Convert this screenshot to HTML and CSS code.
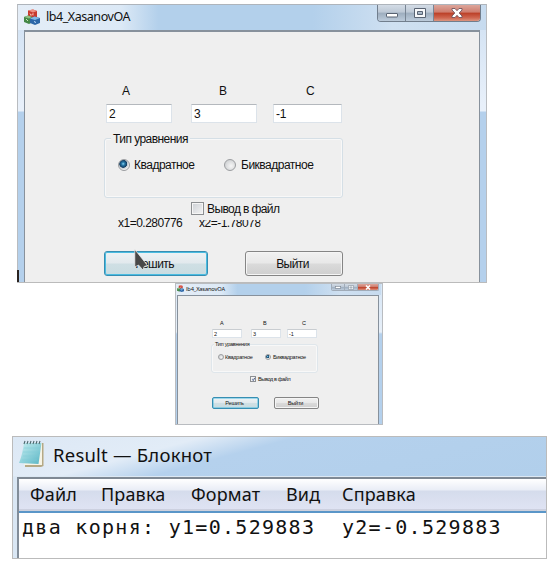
FILE: index.html
```html
<!DOCTYPE html>
<html lang="ru">
<head>
<meta charset="utf-8">
<title>lb4_XasanovOA</title>
<link rel="stylesheet" href="styles.css">
</head>
<body>
<svg class="defs" width="0" height="0">
  <defs>
    <linearGradient id="page" x1="0" y1="0" x2="1" y2="1"><stop offset="0" stop-color="#c9eff2"/><stop offset="1" stop-color="#58b5c4"/></linearGradient>
    <symbol id="mfc" viewBox="0 0 16 16">
      <path d="M4 1.500L9 .5l4 1.500v6l-4 1.500L4 8z" fill="#c83a2e"/><path d="M4 1.500L9 .5l4 1.500-4 1.500z" fill="#ee9184"/><path d="M6 4.500l1 2 2-2v2" fill="none" stroke="#ffd3c7" stroke-width=".8"/>
      <path d="M0 8l4-1.500L8 8v5.500l-3 1.500-5-2z" fill="#438746"/><path d="M0 8l4-1.500L8 8l-3 1.500z" fill="#91bf83"/><path d="M2 10l2 2" stroke="#c9e8af"/>
      <path d="M6 9.500l4.500-2L16 9v5l-5 2-5-2z" fill="#2b66a8"/><path d="M6 9.500l4.500-2L16 9l-5 2z" fill="#83b9e4"/><path d="M10 12.500l2 1" stroke="#c0dfff"/>
    </symbol>
  </defs>
</svg>

<section class="window main">
  <header class="titlebar">
    <svg class="app-icon"><use href="#mfc"/></svg>
    <span class="title">lb4_XasanovOA</span>
    <div class="controls">
      <i class="ctl min"><svg viewBox="0 0 12 5"><rect x=".5" y=".5" width="11" height="3.500" rx=".5" fill="#fff" stroke="#596372"/></svg></i>
      <i class="ctl max"><svg viewBox="0 0 12 10"><path d="M.5.5h11v9H.5zM3.500 3.500v3h5v-3z" fill="#f7f8fa" fill-rule="evenodd" stroke="#596372"/></svg></i>
      <i class="ctl close"><svg viewBox="0 0 12 10"><path d="M1 .5h3l2 2.200 2-2.200h3v1.500L8.200 5 11 8v1.500H8L6 7.300 4 9.500H1V8l2.800-3L1 2z" fill="#fff" stroke="#71545c" stroke-width=".9"/></svg></i>
    </div>
  </header>
  <div class="client">
    <div class="labels"><span>A</span><span>B</span><span>C</span></div>
    <div class="inputs"><div class="field">2</div><div class="field">3</div><div class="field">-1</div></div>
    <div class="group">
      <span class="legend">Тип уравнения</span>
      <div class="choices"><i class="radio on"></i><span class="quad">Квадратное</span><i class="radio"></i><span class="biquad">Биквадратное</span></div>
    </div>
    <div class="check-row"><i class="check"></i><span>Вывод в файл</span></div>
    <div class="answer"><span>x1=0.280776</span><span>x2=-1.78078</span></div>
    <div class="buttons"><div class="btn primary">Решить</div><div class="btn">Выйти</div></div>
  </div>
  <svg class="cursor" viewBox="0 0 14 22"><path d="M.8.5v17.500l3.700-2 4.500 5 1.200-3.500 3.300-1z" fill="#484848" stroke="#f2f2f2" stroke-width=".7"/></svg>
</section>

<section class="window small">
  <header class="titlebar">
    <svg class="app-icon"><use href="#mfc"/></svg>
    <span class="title">lb4_XasanovOA</span>
    <div class="controls">
      <i class="ctl min"><svg viewBox="0 0 6 3"><rect x=".3" y=".3" width="5.400" height="2" fill="#fff" stroke="#77818e" stroke-width=".6"/></svg></i>
      <i class="ctl max"><svg viewBox="0 0 6 5"><path d="M.5.500h5v4h-5zM2 2h2v1H2z" fill="#e9edf2" stroke="#8993a0" stroke-width=".6"/></svg></i>
      <i class="ctl close"><svg viewBox="0 0 6 5"><path d="M1 .5l4 4M5 .5l-4 4" stroke="#fff" stroke-width="1.500"/></svg></i>
    </div>
  </header>
  <div class="client">
    <div class="labels"><span>A</span><span>B</span><span>C</span></div>
    <div class="inputs"><div class="field">2</div><div class="field">3</div><div class="field">-1</div></div>
    <div class="group">
      <span class="legend">Тип уравнения</span>
      <div class="choices"><i class="radio"></i><span class="quad">Квадратное</span><i class="radio on"></i><span class="biquad">Биквадратное</span></div>
    </div>
    <div class="check-row"><i class="check"><svg viewBox="0 0 6 6"><path d="M1.500 2.800l1.200 1.500L4.600 1" fill="none" stroke="#34497f" stroke-width="1"/></svg></i><span>Вывод в файл</span></div>
    <div class="buttons"><div class="btn primary">Решить</div><div class="btn">Выйти</div></div>
  </div>
</section>

<section class="notepad">
  <header class="note-title">
    <svg class="note-icon" viewBox="0 0 26 28">
      <path d="M6 3h18.500v23L22 27H6z" fill="#b5a985"/><path d="M6 3h17v22H5z" fill="#f6f4e6"/>
      <path d="M5 3h17.500l-3 21L0 23q3-7 5-20z" fill="url(#page)"/>
      <path d="M5 8h16M4 12h16M4 16h15M3 20h15" stroke="#7fcbd4" stroke-width=".5"/>
      <path d="M5 4l1-3M8 4l1-3M11 4l1-3M14 4l1-3M17 4l1-3M20 4l1-3" stroke="#4e686e" stroke-width="1.100"/>
    </svg>
    <span>Result — Блокнот</span>
  </header>
  <div class="note-client">
    <nav class="menu"><span>Файл</span><span>Правка</span><span>Формат</span><span>Вид</span><span>Справка</span></nav>
    <pre class="text">два корня: y1=0.529883  y2=-0.529883</pre>
  </div>
</section>
</body>
</html>
```
FILE: styles.css
```css
* { box-sizing: border-box; }
body { margin: 0; width: 560px; height: 565px; overflow: hidden; background: #fff; color: #111; font-family: "Liberation Sans", sans-serif; }
.defs { display: block; height: 0; }
span { white-space: nowrap; }
i { display: block; }

/* application window */
.window { background: linear-gradient(#cfe0f2, #e8f0fa 100px, #e8f0fa 106px, #b4d0ec 107px); border: 1px solid #b9bcc0; }
.titlebar { display: flex; background: linear-gradient(90deg, #e4edf7, #dce9f6 22%, #b3d0eb 30%, #b3d0eb 63%, #cfe0f1 80%, #c7dbef); }
.controls { display: flex; margin-left: auto; border: 1px solid #717e8d; border-top: 0; border-radius: 0 0 4px 4px; overflow: hidden; }
.ctl { display: flex; align-items: center; justify-content: center; background: linear-gradient(#d3dce6, #bdc8d5 45%, #9dadbe 50%, #bccbdb); border-right: 1px solid #788594; }
.ctl svg { display: block; }
.ctl.close { border: 0; background: linear-gradient(#dda69b, #cf7d6e 45%, #bb3f27 50%, #cf6650 80%, #dc9580); }
.client { background: #efefef; border-style: solid; border-color: #87919c; }
.labels, .inputs, .choices, .check-row, .answer, .buttons { display: flex; }
.field { background: #fff; border: 1px solid #dce3ea; border-top-color: #b4b8bd; }
.group { border: 1px solid #d5dfe6; border-radius: 3px; box-shadow: inset 0 0 0 1px #f8f8f8; }
.legend { display: block; width: max-content; background: #efefef; }
.radio { border: 1px solid #9b9da0; border-radius: 50%; background: radial-gradient(circle at 60% 60%, #f6f6f6, #d3d5d7 70%); }
.radio.on { background: radial-gradient(circle at 42% 38%, #8fd7f2 0, #2a7cac 18%, #123c61 43%, #c4ccd2 50%, #f1f1f1 70%); }
.check { border: 1px solid #8c8f92; background: linear-gradient(135deg, #ccd0d5, #f4f4f4); box-shadow: inset 0 0 0 1px #f5f5f5; }
.btn { display: flex; align-items: center; justify-content: center; border: 1px solid #858585; border-radius: 3px; background: linear-gradient(#f1f1f1, #e8e8e8 48%, #dadada 52%, #cfcfcf); box-shadow: inset 0 0 0 1px #f5f5f5; }
.btn.primary { border-color: #378eb2; background: linear-gradient(#edf2f4, #e2e9ed 48%, #cfdfe4 52%, #c9dce1); box-shadow: inset 0 0 0 1px #4abce1; }

.main { position: relative; width: 470px; height: 279px; margin: 4px 0 0 17px; padding: 0 6px; font-size: 12px; border-bottom: 1px solid #bbb; border-top-color: #aeb4bb; }
.main::after { content: ""; position: absolute; left: -1px; bottom: 0; width: 2px; height: 12px; background: #2b2420; }
.main .titlebar { height: 25px; margin: 0 -6px; padding: 0 6px; }
.main .app-icon { width: 16px; height: 16px; margin: 4px 0 0 0; }
.main .title { margin-left: 6px; font: 12.500px/24px "Noto Sans", sans-serif; letter-spacing: -.45px; }
.main .controls { width: 104px; height: 17px; margin-right: -1px; }
.main .ctl.min, .main .ctl.max { width: 28px; }
.main .min svg { width: 12px; margin-top: 4px; }
.main .max svg { width: 12px; }
.main .ctl.close { flex: 1; }
.main .close svg { width: 12px; }
.main .client { height: 252px; border-width: 2px 1px 0; padding: 50px 0 0 79px; border-bottom: 0; }
.main .labels { height: 22px; line-height: 18px; padding-left: 18px; }
.main .labels span:nth-child(1) { width: 97px; }
.main .labels span:nth-child(2) { width: 87px; }
.main .inputs { margin-left: 2px; height: 19px; line-height: 18px; }
.main .field { width: 66px; padding-left: 2px; margin-right: 19px; letter-spacing: -.3px; }
.main .field:nth-child(2) { margin-right: 16px; }
.main .field:nth-child(3) { width: 69px; }
.main .group { width: 239px; height: 60px; margin-top: 15px; }
.main .legend { margin: -7px 0 0 6px; padding: 0 2px; line-height: 14px; letter-spacing: -.55px; }
.main .choices { margin: 11px 0 0 13px; line-height: 16px; height: 16px; align-items: center; letter-spacing: -.5px; }
.main .radio { width: 12px; height: 12px; flex: none; }
.main .quad { width: 90px; margin-left: 4px; }
.main .biquad { margin-left: 5px; }
.main .check-row { margin: 4px 0 0 87px; height: 14px; }
.main .check { width: 13px; height: 13px; }
.main .check-row span { margin-left: 3px; line-height: 14px; letter-spacing: -.6px; }
.main .answer { height: 13px; line-height: 14px; margin: 0 0 0 14px; letter-spacing: -.5px; }
.main .answer span:first-child { width: 81px; }
.main .answer span:last-child { clip-path: inset(4px 0 0); }
.main .buttons { margin-top: 22px; height: 25px; letter-spacing: -.6px; }
.main .btn { width: 98px; margin-left: 37px; padding-right: 3px; }
.main .primary { width: 104px; margin-left: 0; }
.cursor { position: absolute; left: 116px; top: 244px; width: 14px; height: 22px; }

.small { width: 208px; height: 142px; margin-left: 175px; padding: 0 3px 0 1px; font-size: 5.500px; background: linear-gradient(#d6e6f6, #e7eff8 48px, #b4d0ec 50px); }
.small .titlebar { height: 11px; margin: 0 -2px 0 -1px; padding: 0 2px 0 1px; }
.small .app-icon { width: 7px; height: 7px; margin: 1px 0 0; }
.small .title { margin-left: 2px; font: 5.700px/10px "Noto Sans", sans-serif; letter-spacing: -.15px; }
.small .controls { height: 7px; width: 48px; border-radius: 0 0 2px 2px; border-color: #a0abb8; }
.small .ctl.min, .small .ctl.max { width: 13px; border-color: #a0abb8; }
.small .ctl.close { flex: 1; }
.small .ctl svg { width: 6px; }
.small .client { height: 129px; border-width: 1px 1px 0; padding: 23px 0 0 34px; }
.small .labels { height: 10px; line-height: 9px; padding-left: 8px; }
.small .labels span:nth-child(1) { width: 43px; }
.small .labels span:nth-child(2) { width: 39px; }
.small .inputs { height: 9px; line-height: 8px; }
.small .field { width: 30px; padding-left: 1px; margin-right: 9px; border-top-color: #c9cdd1; }
.small .field:nth-child(2) { margin-right: 6px; }
.small .group { width: 107px; height: 29px; margin-top: 6px; border-color: #dfe6eb; margin-left: -1px; }
.small .legend { margin: -4px 0 0 2px; padding: 0 1px; line-height: 7px; letter-spacing: -.25px; }
.small .choices { margin: 5px 0 0 6px; height: 8px; align-items: center; letter-spacing: -.25px; }
.small .radio { width: 6px; height: 6px; flex: none; }
.small .quad { width: 40px; margin-left: 1px; }
.small .biquad { margin-left: 2px; }
.small .check-row { margin: 2px 0 0 38px; height: 8px; align-items: center; }
.small .check { width: 6px; height: 6px; border-width: .5px; }
.small .check svg { display: block; width: 5px; height: 5px; }
.small .check-row span { margin-left: 2px; letter-spacing: -.35px; }
.small .buttons { height: 12px; margin-top: 14px; letter-spacing: -.15px; }
.small .btn { width: 45px; margin-left: 15px; padding-right: 2px; border-radius: 2px; }
.small .primary { width: 47px; margin-left: 0; box-shadow: inset 0 0 0 .5px #4abce1; }

/* text editor window */
.notepad { width: 535px; height: 123px; margin: 11px 0 0 12px; border: 1px solid #bbb; padding-left: 4px; background: #dae7f4; font-family: "Noto Sans", sans-serif; }
.note-title { display: flex; height: 40px; margin-left: -4px; padding-left: 6px; background: linear-gradient(165deg, #dce8f5, #e2ecf7 28%, #b5d1ed 42%, #b1cfeb); border-bottom: 1px solid #dce8f3; }
.note-icon { width: 26px; height: 28px; margin-top: 3px; }
.note-title span { margin-left: 8px; font-size: 18.500px; line-height: 35px; letter-spacing: .22px; }
.note-client { height: 81px; border-top: 2px solid #7f8994; border-left: 2px solid #828d99; background: #fff; }
.menu { display: flex; height: 34px; line-height: 30px; font-size: 18px; letter-spacing: .15px; padding-left: 11px; background: linear-gradient(#fff, #e9edf6 11px, #d5dcec 12px, #dfe3f3 30px, #b9bdcc 31px, #e3e5ed 32px); border-bottom: 2px solid #5a96c8; }
.menu span:nth-child(1) { width: 71px; }
.menu span:nth-child(2) { width: 90px; }
.menu span:nth-child(3) { width: 95px; }
.menu span:nth-child(4) { width: 56px; }
.text { margin: 0; padding-left: 3px; font: 20px/28px "DejaVu Sans Mono", monospace; letter-spacing: 1.290px; }
```
